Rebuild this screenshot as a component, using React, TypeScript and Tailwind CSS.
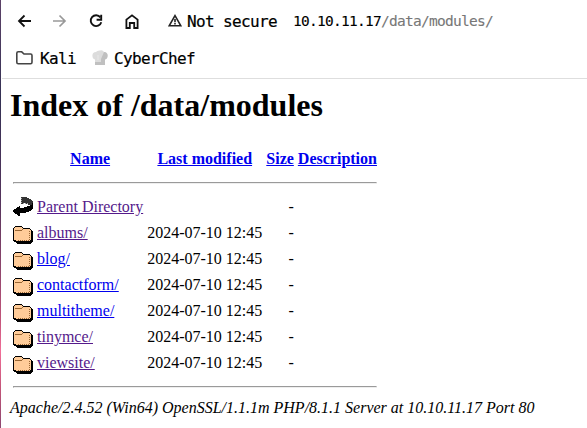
import React from "react";

const FolderIcon = () => (
  <svg width="20" height="22" viewBox="0 0 20 22" className="block" shapeRendering="crispEdges">
    <path fill="#000" d="M2 4h7v1h1v1h7v1h1v1h1v1h1v11h-1v1h-1v1H4v-1H3v-1H1v-1H0V6h1V5h1z" />
    <path fill="#fc9" d="M2 5h7v1h1v1h7v1h1v10h-1v1H3v-1H1V6h1z" />
    <path fill="#963" d="M2 8h7v1H2zM9 7h1v1H9z" />
    <path fill="none" stroke="#963" strokeDasharray="1 1" d="M16.5 9v9M5 18.5h12" />
  </svg>
);

const BackIcon = () => (
  <svg width="20" height="22" viewBox="0 0 20 22" className="block" shapeRendering="crispEdges">
    <path fill="#333" d="M8 1h6v1h2v1h2v1h1v1h1v4h-5V8h-3V7h-2v1H8z" />
    <path fill="#000" d="M20 5v8h-1v1h-1v1h-2v1h-3v1H7v3H5v-1H4v-1H2v-1H1v-1H0v-2h1v-1h2v-1h1v-1h2v-1h1v2h4v-1h3v-1h3V9h2V7h1V5z" />
    <path fill="none" stroke="#aaa" strokeDasharray="1 1" d="M8.5 2v6M10 7.5h5" />
  </svg>
);

const rows = [
  { name: "albums/", visited: true },
  { name: "blog/", visited: false },
  { name: "contactform/", visited: false },
  { name: "multitheme/", visited: false },
  { name: "tinymce/", visited: true },
  { name: "viewsite/", visited: true },
];

const Rule = () => (
  <tr>
    <td colSpan={5} className="p-px">
      <div className="my-2 h-0.5 border border-[#9a9a9a] border-r-[#eee] border-b-[#eee]" />
    </td>
  </tr>
);

export default function App() {
  return (
    <div className="flex h-[428px] w-[587px] overflow-hidden bg-white text-black">
      <div className="w-px shrink-0 bg-[linear-gradient(to_bottom,#5c4268_0%,#343154_23%,#54345c_47%,#97486f_65%,#c4557b_75%,#f16e98_82%,#c25478_91%,#8c4670_100%)]" />
      <div className="min-w-0 flex-1 rounded-tl-md border-t border-l border-transparent border-t-white">
        <header className="h-[78px] border-b border-[#dedede] font-['DejaVu_Sans_Mono',monospace]">
          <div className="flex h-10 items-center pl-[15px]">
            <svg width="14" height="14" viewBox="0 0 14 14" className="shrink-0" fill="none" stroke="#111" strokeWidth="1.8"><path d="M14 7H2M7.5 1.5 2 7l5.5 5.5" /></svg>
            <svg width="14" height="14" viewBox="0 0 14 14" className="ml-[22px] shrink-0" fill="none" stroke="#999" strokeWidth="1.7"><path d="M0 7h12M6.5 1.5 12 7l-5.5 5.5" /></svg>
            <svg width="14" height="14" viewBox="0 0 14 14" className="ml-[22px] shrink-0" fill="none" stroke="#111" strokeWidth="1.9"><path d="M11.4 3.4A5.4 5.4 0 1 0 12.3 8.3" /><path d="M12.2.8v4.9H7.6" /></svg>
            <svg width="14" height="15" viewBox="0 0 14 15" className="ml-[22px] shrink-0" fill="none" stroke="#111" strokeWidth="1.8"><path d="M1.4 14V5.6L7 1.3l5.6 4.3V14H9.2V9H4.8v5z" /></svg>
            <svg width="14" height="13" viewBox="0 0 14 13" className="mb-px ml-[29px] shrink-0" fill="none" stroke="#222" strokeWidth="1.6"><path d="M7 1.7 12.7 11.7H1.3z" /><path d="M7 5v3.3M7 9v1.4" /></svg>
            <span className="ml-[5px] w-[90px] shrink-0 pt-0.5 text-[16px] tracking-[-0.63px] whitespace-pre [-webkit-text-stroke:0.2px]">Not secure</span>
            <span className="ml-4 pt-0.5 text-[14.5px] tracking-[-0.73px] whitespace-pre [-webkit-text-stroke:0.1px]">10.10.11.17<span className="text-[#777]">/data/modules/</span></span>
          </div>
          <div className="flex h-9 items-center pl-3.5 text-[16px] tracking-[-0.63px] [-webkit-text-stroke:0.2px]">
            <svg width="17" height="14" viewBox="0 0 17 14" className="mb-0.5" fill="none" stroke="#444" strokeWidth="1.6"><path d="M.8 2.2Q.8.8 2.2.8h3.5L8 3h6.6q1.4 0 1.4 1.4v6.9q0 1.4-1.4 1.4H2.2Q.8 12.7.8 11.3z" /></svg>
            <span className="ml-[7px]">Kali</span>
            <svg width="16" height="16" viewBox="0 0 16 16" className="mb-0.5 ml-4"><path fill="#dcdcdc" d="M3 15V9.5Q.4 8.8.4 5.5.5 2 4 2q1-1.8 4-1.6Q11-.3 12 2q3.5 0 3.6 3.5Q15.6 9 13 9.5V15z" /><path fill="#c0c0c0" d="M12 2q3.5 0 3.6 3.5Q15.6 9 13 9.5V15H9V9zM3 12h10v3H3z" /><path stroke="#e8e8e8" d="M6 5v5" /></svg>
            <span className="ml-[6px]">CyberChef</span>
          </div>
        </header>
        <main className="pl-2 font-['Liberation_Serif',serif] text-[16px] leading-[18px]">
          <h1 className="pt-2 text-[32px] leading-[36px] font-bold">Index of /data/modules</h1>
          <table className="mt-6 border-separate border-spacing-[2px]">
            <tbody>
              <tr className="h-[22px] align-top text-[#0000ee]">
                <th className="p-px"><div className="w-5" /></th>
                <th className="p-px"><a className="underline">Name</a></th>
                <th className="p-px"><a className="underline">Last modified</a></th>
                <th className="p-px"><a className="underline">Size</a></th>
                <th className="p-px"><a className="underline">Description</a></th>
              </tr>
              <Rule />
              <tr>
                <td className="p-px"><BackIcon /></td>
                <td className="p-px"><a className="text-[#551a8b] underline">Parent Directory</a></td>
                <td className="p-px" />
                <td className="p-px text-right">-</td>
                <td />
              </tr>
              {rows.map((r) => (
                <tr key={r.name}>
                  <td className="p-px"><FolderIcon /></td>
                  <td className="p-px"><a className={r.visited ? "text-[#551a8b] underline" : "text-[#0000ee] underline"}>{r.name}</a></td>
                  <td className="p-px text-right whitespace-nowrap">2024-07-10 12:45</td>
                  <td className="p-px text-right">-</td>
                  <td />
                </tr>
              ))}
              <Rule />
            </tbody>
          </table>
          <address className="whitespace-nowrap italic">Apache/2.4.52 (Win64) OpenSSL/1.1.1m PHP/8.1.1 Server at 10.10.11.17 Port 80</address>
        </main>
      </div>
    </div>
  );
}
